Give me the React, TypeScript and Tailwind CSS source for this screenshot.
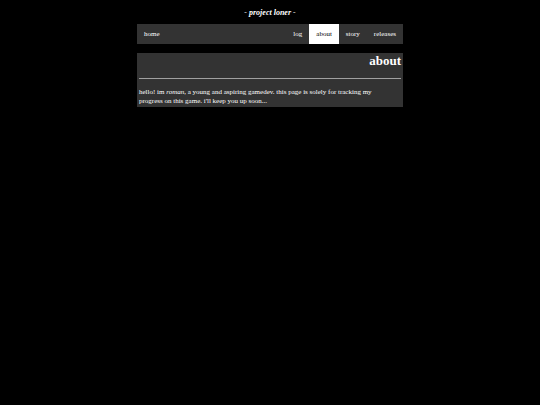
import React from 'react';

type NavItem = {
  label: string;
  href: string;
  active?: boolean;
};

const NAV_ITEMS: NavItem[] = [
  { label: 'log', href: '#log' },
  { label: 'about', href: '#about', active: true },
  { label: 'story', href: '#story' },
  { label: 'releases', href: '#releases' },
];

function NavLink({ label, href, active }: NavItem) {
  return (
    <a
      href={href}
      aria-current={active ? 'page' : undefined}
      className={active ? 'block bg-white px-[7px] py-1.5 text-black' : 'block px-[7px] py-1.5 text-white hover:bg-[#111111]'}
    >
      {label}
    </a>
  );
}

export default function App() {
  return (
    <div className="min-h-screen bg-black px-1 pt-2 font-['Liberation_Serif',serif] text-[7px] leading-2 text-white">
      <div className="mx-auto w-1/2">
        <header className="text-center">
          <h1 className="text-[8px] leading-[9px] font-bold italic">- project loner -</h1>
        </header>

        <nav className="mt-[7px] flex justify-between bg-[#333333]">
          <NavLink label="home" href="#home" />
          <div className="flex">
            {NAV_ITEMS.map((item) => (
              <NavLink key={item.label} {...item} />
            ))}
          </div>
        </nav>

        <main className="mt-[9px] bg-[#333333] px-0.5 pb-px">
          <h2 className="text-right text-[13px] leading-4 font-bold">about</h2>
          <hr className="mt-[9px] border-[#a0a0a0]" />
          <p className="mt-[9px] pr-2 leading-[9px]">
            hello! im <em>roman</em>, a young and aspiring gamedev. this page is solely for tracking my progress on this
            game. i'll keep you up soon...
          </p>
        </main>
      </div>
    </div>
  );
}
